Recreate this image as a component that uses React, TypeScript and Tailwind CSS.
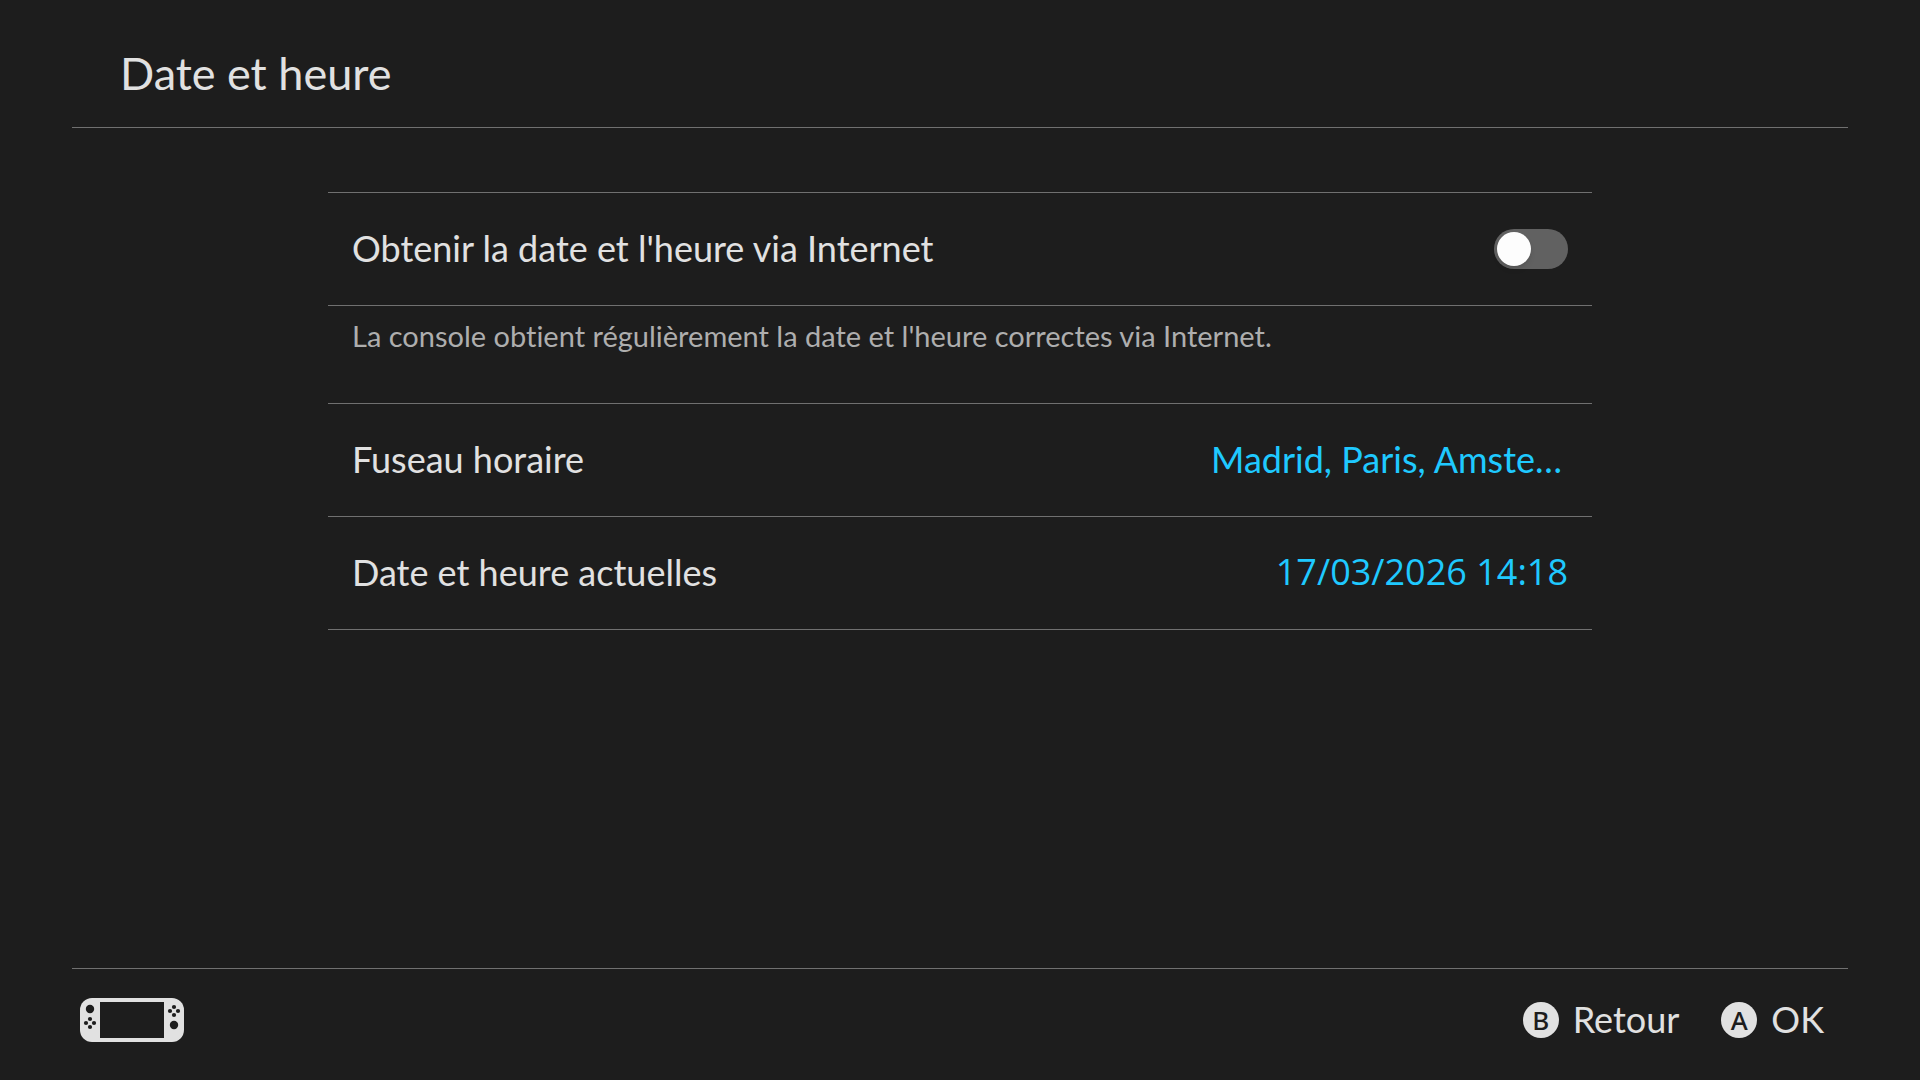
import React, { useState } from 'react';

function ConsoleIcon() {
  return (
    <svg viewBox="0 0 104 44" className="w-[104px] h-11" aria-hidden="true">
      <rect width="104" height="44" rx="12" fill="#e1e1e1" />
      <g fill="#1d1d1d">
        <rect x="20" y="4" width="64" height="36" />
        <circle cx="10" cy="11" r="4.2" />
        <circle cx="10" cy="21" r="2.1" />
        <circle cx="6" cy="25" r="2.1" />
        <circle cx="14" cy="25" r="2.1" />
        <circle cx="10" cy="29" r="2.1" />
        <circle cx="94" cy="9" r="2.1" />
        <circle cx="90" cy="13" r="2.1" />
        <circle cx="98" cy="13" r="2.1" />
        <circle cx="94" cy="17" r="2.1" />
        <circle cx="94" cy="27" r="4.2" />
      </g>
    </svg>
  );
}

function Row({ label, value, valueClass }: { label: string; value: string; valueClass: string }) {
  return (
    <button className="w-full h-[113px] px-6 pb-0.5 flex items-center justify-between border-b border-[#707070] text-left">
      <span>{label}</span>
      <span className={`text-[#1fc9ff] ${valueClass}`}>{value}</span>
    </button>
  );
}

function ActionHint({ button, label }: { button: string; label: string }) {
  return (
    <button className="flex items-center gap-3.5">
      <span className="w-9 h-9 rounded-full bg-[#e1e1e1] text-[#1d1d1d] text-[26px] leading-9 font-medium text-center font-['Noto_Sans',sans-serif]">
        {button}
      </span>
      <span className="pb-0.5">{label}</span>
    </button>
  );
}

export default function App() {
  const [sync, setSync] = useState(false);

  return (
    <div className="min-h-screen bg-[#1d1d1d] text-[#e1e1e1] px-[72px] flex flex-col font-[Lato,'Open_Sans',sans-serif] text-4xl [font-variant-ligatures:none]">
      <header className="h-32 px-12 pt-[18px] flex items-center border-b border-[#707070]">
        <h1 className="text-[45px]">Date et heure</h1>
      </header>

      <main className="flex-1 px-64 pt-16">
        <label className="h-[114px] px-6 flex items-center justify-between border-y border-[#707070] cursor-pointer">
          <span className="pb-0.5">Obtenir la date et l'heure via Internet</span>
          <input
            type="checkbox"
            role="switch"
            checked={sync}
            onChange={(e) => setSync(e.target.checked)}
            className="peer sr-only"
          />
          <span className="w-[74px] h-10 p-[3px] rounded-full bg-[#616161] flex items-center peer-checked:justify-end peer-checked:bg-[#1fc9ff]">
            <span className="w-[34px] h-[34px] rounded-full bg-[#fdfdfd] shadow-md" />
          </span>
        </label>
        <p className="h-[97px] px-6 pt-3.5 text-[29px] text-[#aeaeae]">
          La console obtient régulièrement la date et l'heure correctes via Internet.
        </p>
        <div className="border-t border-[#707070]">
          <Row label="Fuseau horaire" value="Madrid, Paris, Amste…" valueClass="pr-1.5" />
          <Row label="Date et heure actuelles" value="17/03/2026 14:18" valueClass="font-['Open_Sans',sans-serif]" />
        </div>
      </main>

      <footer className="h-28 pl-2 pr-6 pb-[9px] flex items-center justify-between border-t border-[#707070]">
        <ConsoleIcon />
        <div className="flex items-center gap-[42px]">
          <ActionHint button="B" label="Retour" />
          <ActionHint button="A" label="OK" />
        </div>
      </footer>
    </div>
  );
}
